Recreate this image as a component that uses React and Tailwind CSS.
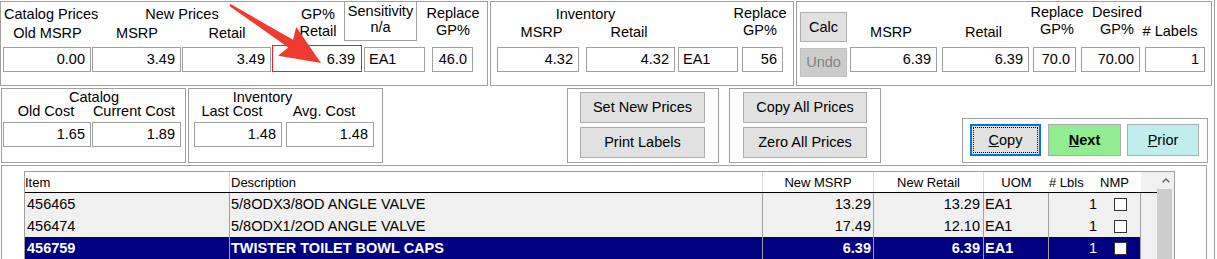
import React from "react";

function Field({ className = "", left = false, children }) {
  return (
    <div
      className={
        "h-[25px] shrink-0 border border-[#a0a0a0] bg-white flex items-center leading-none " +
        (left ? "justify-start pl-[4px] " : "justify-end pr-[5px] ") +
        className
      }
    >
      {children}
    </div>
  );
}

function Btn({ className = "", children }) {
  return (
    <div
      className={
        "shrink-0 bg-[#e1e1e1] border border-[#adadad] flex items-center justify-center leading-none " +
        className
      }
    >
      {children}
    </div>
  );
}

function Check() {
  return <div className="w-[13px] h-[13px] border border-[#333333] bg-white" />;
}

const rows = [
  { item: "456465", desc: "5/8ODX3/8OD ANGLE VALVE", msrp: "13.29", retail: "13.29", uom: "EA1", lbls: "1", sel: false },
  { item: "456474", desc: "5/8ODX1/2OD ANGLE VALVE", msrp: "17.49", retail: "12.10", uom: "EA1", lbls: "1", sel: false },
  { item: "456759", desc: "TWISTER TOILET BOWL CAPS", msrp: "6.39", retail: "6.39", uom: "EA1", lbls: "1", sel: true },
];

export default function App() {
  return (
    <div className="relative w-[1217px] h-[259px] overflow-hidden bg-white text-black text-[14.5px] font-['Liberation_Sans',Arial,sans-serif]">
      <div className="w-[1215px] h-full border-r border-[#a0a0a0] flex flex-col">
        {/* Top row */}
        <div className="flex items-start mt-[1px]">
          {/* Panel 1 */}
          <div className="w-[488px] h-[85px] shrink-0 border border-[#a0a0a0] pl-[2px] flex flex-col">
            <div className="grid grid-cols-[89px_90px_90px_92px_68px_42px] grid-rows-[17px_17px] pt-[4px] leading-[17px] whitespace-nowrap">
              <div className="col-start-1 row-start-1 pl-[1px]">Catalog Prices</div>
              <div className="col-start-2 col-span-2 row-start-1 flex justify-center">New Prices</div>
              <div className="col-start-1 row-start-2 flex justify-center pt-[2px]">Old MSRP</div>
              <div className="col-start-2 row-start-2 flex justify-center pt-[2px]">MSRP</div>
              <div className="col-start-3 row-start-2 flex justify-center pt-[2px]">Retail</div>
              <div className="col-start-4 row-start-1 row-span-2 flex flex-col items-center">
                <span>GP%</span>
                <span>Retail</span>
              </div>
              <div className="col-start-5 row-start-1 row-span-2 -ml-[20px] -mt-[4px] w-[73px] h-[39px] border-x border-b border-[#a0a0a0] flex flex-col items-center pt-[1px] leading-[16px]">
                <span>Sensitivity</span>
                <span>n/a</span>
              </div>
              <div className="col-start-6 row-start-1 row-span-2 flex flex-col items-center -mt-[1px]">
                <span>Replace</span>
                <span>GP%</span>
              </div>
            </div>
            <div className="flex items-start mt-[7px]">
              <Field className="w-[88px]">0.00</Field>
              <Field className="ml-[1px] w-[89px]">3.49</Field>
              <Field className="ml-[1px] w-[89px]">3.49</Field>
              <div className="ml-[1px] -mt-[2px] w-[90px] h-[27px] shrink-0 border border-[#e8202a] bg-white flex items-center justify-end pr-[6px] pt-[2px] leading-none">
                6.39
              </div>
              <Field left className="ml-[2px] w-[61px]">EA1</Field>
              <Field className="ml-[7px] w-[41px]">46.0</Field>
            </div>
          </div>

          {/* Panel 2 */}
          <div className="ml-[2px] w-[304px] h-[85px] shrink-0 border border-[#a0a0a0] pl-[6px] flex flex-col">
            <div className="grid grid-cols-[89px_92px_64px_41px] grid-rows-[17px_17px] pt-[4px] leading-[17px] whitespace-nowrap">
              <div className="col-start-1 col-span-2 row-start-1 flex justify-center pr-[4px]">Inventory</div>
              <div className="col-start-1 row-start-2 flex justify-center pt-[1px]">MSRP</div>
              <div className="col-start-2 row-start-2 flex justify-center pr-[6px] pt-[1px]">Retail</div>
              <div className="col-start-4 row-start-1 row-span-2 flex flex-col items-center pr-[5px] -mt-[1px]">
                <span>Replace</span>
                <span>GP%</span>
              </div>
            </div>
            <div className="flex items-start mt-[7px]">
              <Field className="w-[82px]">4.32</Field>
              <Field className="ml-[7px] w-[89px]">4.32</Field>
              <Field left className="ml-[3px] w-[60px]">EA1</Field>
              <Field className="ml-[4px] w-[41px]">56</Field>
            </div>
          </div>

          {/* Panel 3 */}
          <div className="ml-[2px] w-[416px] h-[85px] shrink-0 border border-[#a0a0a0] flex">
            <div className="ml-[3px] w-[47px] flex flex-col">
              <Btn className="mt-[10px] h-[30px]">Calc</Btn>
              <div className="mt-[6px] h-[29px] bg-[#cccccc] border border-[#bfbfbf] flex items-center justify-center text-[#838383] leading-none">
                Undo
              </div>
            </div>
            <div className="ml-[3px] flex flex-col">
              <div className="grid grid-cols-[92px_91px_48px_64px_60px] grid-rows-[17px_17px] pt-[4px] leading-[17px] whitespace-nowrap">
                <div className="col-start-1 row-start-2 flex justify-center pr-[10px] pt-[1px]">MSRP</div>
                <div className="col-start-2 row-start-2 flex justify-center pr-[8px] pt-[1px]">Retail</div>
                <div className="col-start-3 row-start-1 row-span-2 flex flex-col items-center -mt-[2px]">
                  <span>Replace</span>
                  <span>GP%</span>
                </div>
                <div className="col-start-4 row-start-1 row-span-2 flex flex-col items-center pl-[8px] -mt-[2px]">
                  <span>Desired</span>
                  <span>GP%</span>
                </div>
                <div className="col-start-5 row-start-2 flex justify-center pr-[10px]"># Labels</div>
              </div>
              <div className="flex items-start mt-[7px]">
                <Field className="w-[87px]">6.39</Field>
                <Field className="ml-[5px] w-[87px]">6.39</Field>
                <Field className="ml-[4px] w-[43px]">70.0</Field>
                <Field className="ml-[5px] w-[59px]">70.00</Field>
                <Field className="ml-[5px] w-[60px]">1</Field>
              </div>
            </div>
          </div>
        </div>

        {/* Second row */}
        <div className="flex items-start mt-[2px]">
          <div className="ml-[1px] w-[185px] h-[75px] shrink-0 border border-[#a0a0a0] pl-[1px] flex flex-col">
            <div className="grid grid-cols-[89px_89px] grid-rows-[14px_14px] leading-[14px] pt-[1px] whitespace-nowrap">
              <div className="col-start-1 col-span-2 row-start-1 flex justify-center pl-[4px]">Catalog</div>
              <div className="col-start-1 row-start-2 flex justify-center pr-[3px]">Old Cost</div>
              <div className="col-start-2 row-start-2 flex justify-center pr-[5px]">Current Cost</div>
            </div>
            <div className="flex items-start mt-[4px]">
              <Field className="w-[88px]">1.65</Field>
              <Field className="ml-[1px] w-[89px]">1.89</Field>
            </div>
          </div>

          <div className="ml-[2px] w-[195px] h-[75px] shrink-0 border border-[#a0a0a0] pl-[5px] flex flex-col">
            <div className="grid grid-cols-[92px_88px] grid-rows-[14px_14px] leading-[14px] pt-[1px] whitespace-nowrap">
              <div className="col-start-1 col-span-2 row-start-1 flex justify-center pr-[43px]">Inventory</div>
              <div className="col-start-1 row-start-2 flex justify-center pr-[16px]">Last Cost</div>
              <div className="col-start-2 row-start-2 flex justify-center pr-[12px]">Avg. Cost</div>
            </div>
            <div className="flex items-start mt-[4px]">
              <Field className="w-[88px]">1.48</Field>
              <Field className="ml-[4px] w-[88px]">1.48</Field>
            </div>
          </div>

          <div className="ml-[184px] w-[152px] h-[75px] shrink-0 border border-[#a0a0a0] pl-[12px] flex flex-col">
            <Btn className="mt-[3px] w-[125px] h-[31px]">Set New Prices</Btn>
            <Btn className="mt-[4px] w-[125px] h-[31px]">Print Labels</Btn>
          </div>

          <div className="ml-[10px] w-[152px] h-[75px] shrink-0 border border-[#a0a0a0] pl-[13px] flex flex-col">
            <Btn className="mt-[3px] w-[124px] h-[31px]">Copy All Prices</Btn>
            <Btn className="mt-[4px] w-[124px] h-[31px]">Zero All Prices</Btn>
          </div>

          <div className="ml-[81px] mt-[30px] w-[246px] h-[45px] shrink-0 border border-[#a0a0a0] flex items-start">
            <div className="ml-[7px] mt-[5px] w-[71px] h-[32px] shrink-0 bg-[#e1e1e1] border-2 border-[#0078d7] p-[1px]">
              <div className="w-full h-full border border-dotted border-black flex items-center justify-center leading-none">
                <span><span className="underline">C</span>opy</span>
              </div>
            </div>
            <div className="ml-[7px] mt-[5px] w-[73px] h-[32px] shrink-0 bg-[#90ee90] border border-[#adadad] flex items-center justify-center font-bold leading-none">
              <span><span className="underline">N</span>ext</span>
            </div>
            <div className="ml-[6px] mt-[5px] w-[72px] h-[32px] shrink-0 bg-[#c0eeee] border border-[#adadad] flex items-center justify-center leading-none">
              <span><span className="underline">P</span>rior</span>
            </div>
          </div>
        </div>

        {/* Grid panel */}
        <div className="ml-[1px] mt-[2px] w-[1206px] flex-1 border-t border-x border-[#a0a0a0]">
          <div className="ml-[22px] mt-[5px] w-[1151px] h-[120px] border-t border-x border-[#a0a0a0] flex">
            <div className="flex flex-col w-[1132px]">
              {/* header */}
              <div className="flex h-[21px] border-b border-black bg-white text-[13px] leading-none">
                <div className="w-[205px] border-r border-[#dcdcdc] flex items-center pt-[1px]">Item</div>
                <div className="w-[533px] border-r border-[#dcdcdc] flex items-center pl-[1px] pt-[1px]">Description</div>
                <div className="w-[111px] border-r border-[#dcdcdc] flex items-center justify-center pt-[1px]">New MSRP</div>
                <div className="w-[110px] border-r border-[#dcdcdc] flex items-center justify-center pt-[1px]">New Retail</div>
                <div className="w-[65px] flex items-center justify-center pt-[1px]">UOM</div>
                <div className="w-[51px] flex items-center pt-[1px]"># Lbls</div>
                <div className="w-[41px] flex items-center pt-[1px]">NMP</div>
                <div className="w-[16px] bg-[#f0f0f0]" />
              </div>
              {rows.map((r) => (
                <div
                  key={r.item}
                  className={
                    "flex h-[22px] leading-none " +
                    (r.sel ? "bg-[#000080] text-white font-bold" : "bg-[#f0f0f0]")
                  }
                >
                  <div className="w-[205px] border-r border-[#a0a0a0] flex items-center pl-[2px]">{r.item}</div>
                  <div className="w-[533px] border-r border-[#a0a0a0] flex items-center pl-[1px]">{r.desc}</div>
                  <div className="w-[111px] border-r border-[#a0a0a0] flex items-center justify-end pr-[2px]">{r.msrp}</div>
                  <div className="w-[110px] border-r border-[#a0a0a0] flex items-center justify-end pr-[3px]">{r.retail}</div>
                  <div className="w-[65px] border-r border-[#a0a0a0] flex items-center pl-[1px]">{r.uom}</div>
                  <div className={"w-[51px] flex items-center justify-end pr-[3px] " + (r.sel ? "font-normal" : "")}>{r.lbls}</div>
                  <div className="w-[41px] border-r border-[#a0a0a0] flex items-center pl-[14px]">
                    <Check />
                  </div>
                  <div className="w-[16px] bg-[#f0f0f0]" />
                </div>
              ))}
            </div>
            {/* scrollbar */}
            <div className="w-[17px] bg-[#f0f0f0] flex flex-col">
              <div className="h-[17px] flex items-center justify-center">
                <svg width="8" height="5" viewBox="0 0 8 5">
                  <polyline points="0.7,4.3 4,1 7.3,4.3" fill="none" stroke="#606060" strokeWidth="1.4" />
                </svg>
              </div>
              <div className="flex-1 mr-[2px] bg-[#cdcdcd]" />
            </div>
          </div>
        </div>
      </div>

      {/* red annotation arrow */}
      <svg className="absolute left-0 top-0 pointer-events-none" width="400" height="90" viewBox="0 0 400 90">
        <polygon
          points="230.6,4.0 293.0,39.8 296.3,27.1 321,63 278.1,55.7 288.2,47.4 229.4,6.0"
          fill="#ef3b2f"
        />
      </svg>
    </div>
  );
}
